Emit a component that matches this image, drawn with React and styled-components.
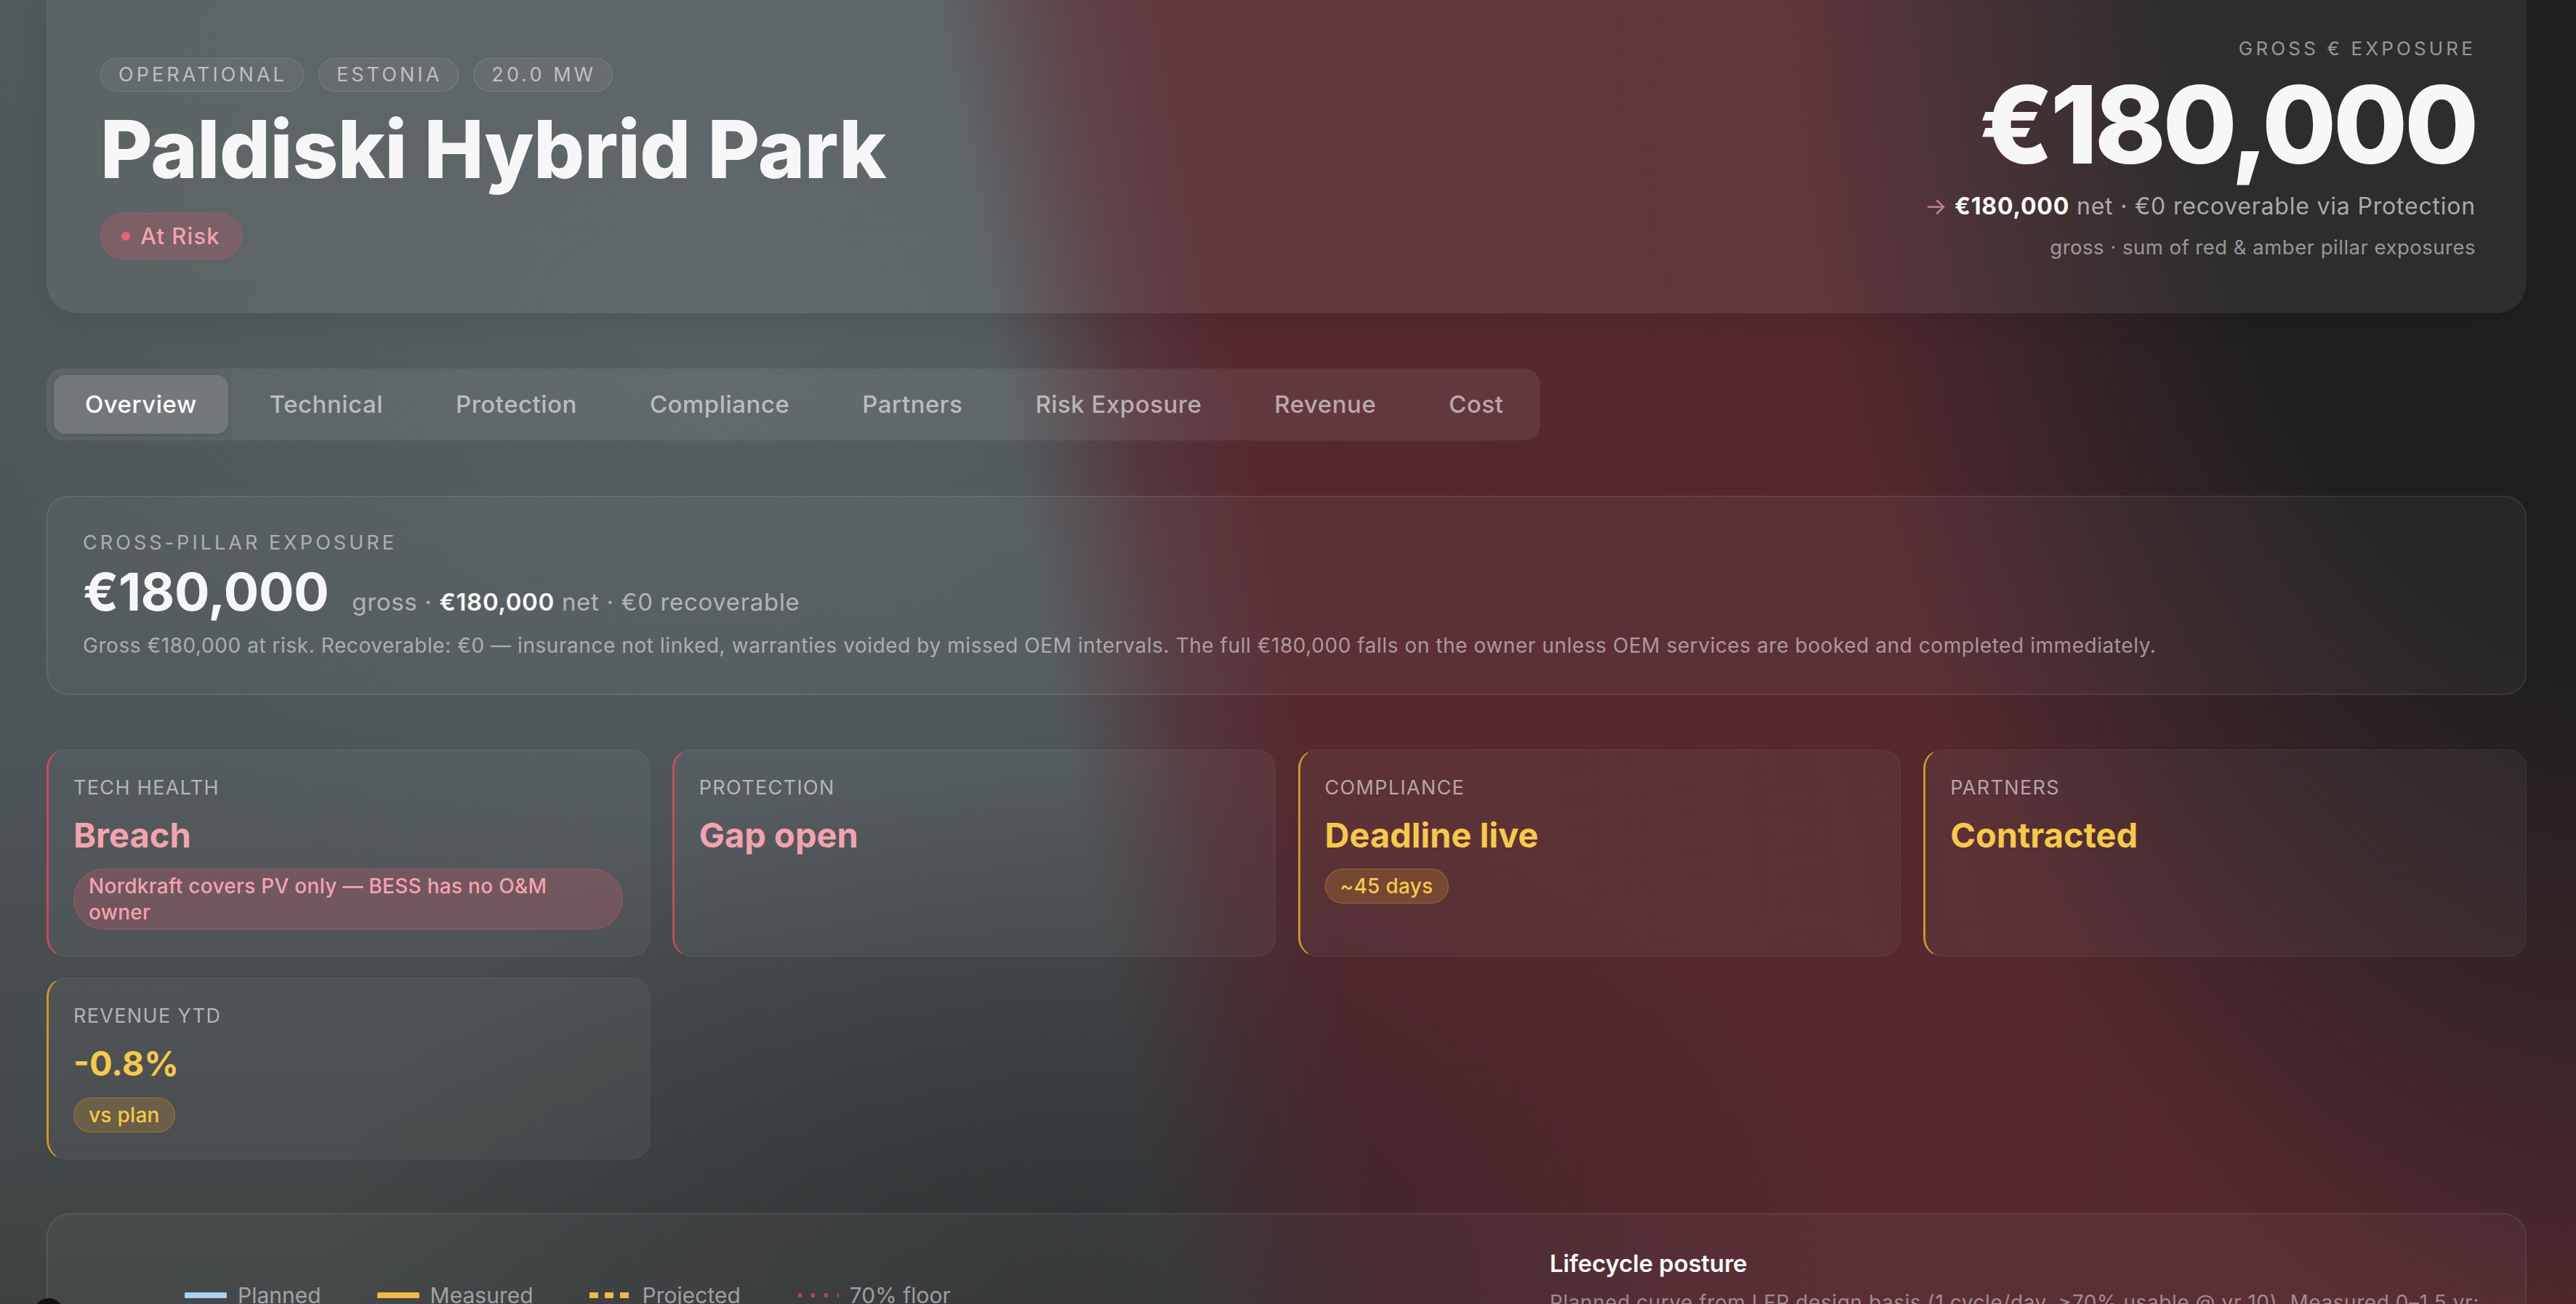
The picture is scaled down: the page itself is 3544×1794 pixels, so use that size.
import React from "react";
import styled, { createGlobalStyle, css } from "styled-components";

const tones = {
  red: { text: "#f4a3ad", edge: "#c94a5c", pillBg: "rgba(232, 92, 112, 0.22)", pillBorder: "rgba(232, 92, 112, 0.32)" },
  amber: { text: "#f7c948", edge: "#cf952a", pillBg: "rgba(222, 156, 42, 0.22)", pillBorder: "rgba(222, 156, 42, 0.4)" },
};

const tags = ["Operational", "Estonia", "20.0 MW"];
const tabs = ["Overview", "Technical", "Protection", "Compliance", "Partners", "Risk Exposure", "Revenue", "Cost"];

const pillars = [
  { label: "Tech health", value: "Breach", tone: "red", note: "Nordkraft covers PV only — BESS has no O&M owner" },
  { label: "Protection", value: "Gap open", tone: "red" },
  { label: "Compliance", value: "Deadline live", tone: "amber", note: "~45 days" },
  { label: "Partners", value: "Contracted", tone: "amber" },
  { label: "Revenue YTD", value: "-0.8%", tone: "amber", note: "vs plan" },
];

const legend = [
  { label: "Planned", kind: "solid", color: "#a9d1f2" },
  { label: "Measured", kind: "solid", color: "#f0b942" },
  { label: "Projected", kind: "dash", color: "#f0b942" },
  { label: "70% floor", kind: "dot", color: "#b8434f" },
];

const Swatch = ({ kind, color }) => (
  <svg width="58" height="10" viewBox="0 0 58 10">
    {kind === "solid" && <rect x="0" y="1" width="58" height="8" rx="1.5" fill={color} />}
    {kind === "dash" && (
      <line x1="0" y1="5" x2="58" y2="5" stroke={color} strokeWidth="8" strokeDasharray="12 9" />
    )}
    {kind === "dot" && (
      <line x1="2" y1="5" x2="58" y2="5" stroke={color} strokeWidth="6" strokeDasharray="5 13" />
    )}
  </svg>
);

export default function App() {
  return (
    <>
      <GlobalStyle />
      <Page>
        <HeaderCard>
          <HeaderLeft>
            <TagRow>
              {tags.map((t) => (
                <Tag key={t}>{t}</Tag>
              ))}
            </TagRow>
            <Title>Paldiski Hybrid Park</Title>
            <StatusPill>
              <StatusDot />
              At Risk
            </StatusPill>
          </HeaderLeft>
          <HeaderRight>
            <Eyebrow>Gross € exposure</Eyebrow>
            <BigAmount>€180,000</BigAmount>
            <NetLine>
              <Arrow>→</Arrow> <strong>€180,000</strong> net · €0 recoverable via Protection
            </NetLine>
            <Footnote>gross · sum of red &amp; amber pillar exposures</Footnote>
          </HeaderRight>
        </HeaderCard>

        <TabBar>
          {tabs.map((t, i) => (
            <Tab key={t} active={i === 0}>
              {t}
            </Tab>
          ))}
        </TabBar>

        <ExposureCard>
          <SectionLabel>Cross-pillar exposure</SectionLabel>
          <AmountRow>
            <Amount>€180,000</Amount>
            <AmountMeta>
              gross · <strong>€180,000</strong> net · €0 recoverable
            </AmountMeta>
          </AmountRow>
          <Description>
            Gross €180,000 at risk. Recoverable: €0 — insurance not linked, warranties voided by missed OEM
            intervals. The full €180,000 falls on the owner unless OEM services are booked and completed
            immediately.
          </Description>
        </ExposureCard>

        <PillarGrid>
          {pillars.map((p) => (
            <PillarCard key={p.label} tone={p.tone}>
              <PillarLabel>{p.label}</PillarLabel>
              <PillarValue tone={p.tone}>{p.value}</PillarValue>
              {p.note && (
                <div>
                  <Note tone={p.tone}>{p.note}</Note>
                </div>
              )}
            </PillarCard>
          ))}
        </PillarGrid>

        <Panel>
          <ChartCol>
            <Legend>
              {legend.map((l) => (
                <LegendItem key={l.label}>
                  <Swatch kind={l.kind} color={l.color} />
                  {l.label}
                </LegendItem>
              ))}
            </Legend>
            <ChartSpace />
          </ChartCol>
          <SideCol>
            <SideTitle>Lifecycle posture</SideTitle>
            <SideText>
              Planned curve from LFP design basis (1 cycle/day, ≥70% usable @ yr 10). Measured 0–1.5 yr:
              degradation tracking slightly ahead of plan; projection extends the measured slope to year 10.
            </SideText>
          </SideCol>
        </Panel>
      </Page>
      <DevBadge />
    </>
  );
}

const GlobalStyle = createGlobalStyle`
  html {
    min-height: 100%;
    background:
      radial-gradient(ellipse 1400px 2700px at 3600px -300px, #1f1f1f 0%, #1f1f1f 45%, rgba(31, 31, 31, 0) 82%),
      radial-gradient(ellipse 30% 42% at 42% 100%, rgba(28, 28, 30, 0.45), rgba(28, 28, 30, 0) 100%),
      linear-gradient(80deg, rgba(85, 41, 47, 0) 41.5%, rgba(85, 41, 47, 0.7) 46%, #55292f 50%, #53282e 100%),
      radial-gradient(ellipse 28% 45% at 28% 28%, rgba(110, 120, 126, 0.22), rgba(110, 120, 126, 0) 100%),
      linear-gradient(180deg, #51595c 0%, #4e5558 55%, #3e4243 100%);
    background-attachment: fixed;
  }
  body {
    margin: 0;
    font-family: Inter, "Noto Sans", sans-serif;
    color: #f4f4f5;
  }
  * { box-sizing: border-box; }
`;

const Page = styled.div`
  padding: 0 68px 200px 64px;
  display: flex;
  flex-direction: column;
`;

const HeaderCard = styled.header`
  display: flex;
  justify-content: space-between;
  align-items: flex-start;
  padding: 50px 70px 72px 74px;
  background: rgba(255, 255, 255, 0.065);
  border-radius: 0 0 42px 42px;
  box-shadow: 0 10px 40px rgba(0, 0, 0, 0.08);
`;

const HeaderLeft = styled.div`
  padding-top: 30px;
  display: flex;
  flex-direction: column;
  align-items: flex-start;
`;

const TagRow = styled.div`
  display: flex;
  gap: 20px;
`;

const Tag = styled.span`
  font-size: 27px;
  line-height: 34px;
  letter-spacing: 0.15em;
  text-transform: uppercase;
  color: rgba(255, 255, 255, 0.58);
  padding: 5px 22px 5px 24px;
  border-radius: 999px;
  background: rgba(255, 255, 255, 0.05);
  border: 1.5px solid rgba(255, 255, 255, 0.13);
`;

const Title = styled.h1`
  margin: 19px 0 0;
  font-size: 110px;
  line-height: 1.1;
  font-weight: 800;
  letter-spacing: -0.005em;
  color: #f7f7f7;
`;

const StatusPill = styled.span`
  margin-top: 27px;
  display: inline-flex;
  align-items: center;
  gap: 14px;
  padding: 13px 29px 13px 28px;
  font-size: 31px;
  line-height: 36px;
  font-weight: 500;
  letter-spacing: 0.035em;
  color: #f4a3ad;
  border-radius: 999px;
  background: rgba(224, 82, 104, 0.24);
  border: 1.5px solid rgba(224, 82, 104, 0.3);
`;

const StatusDot = styled.span`
  width: 12px;
  height: 12px;
  border-radius: 50%;
  background: #e06475;
`;

const HeaderRight = styled.div`
  display: flex;
  flex-direction: column;
  align-items: flex-end;
  text-align: right;
`;

const Eyebrow = styled.div`
  font-size: 26px;
  line-height: 34px;
  letter-spacing: 0.16em;
  text-transform: uppercase;
  color: rgba(255, 255, 255, 0.52);
`;

const BigAmount = styled.div`
  margin-top: 14px;
  font-size: 148px;
  line-height: 1;
  font-weight: 800;
  letter-spacing: -0.03em;
  color: #f7f7f7;
`;

const NetLine = styled.div`
  margin-top: 17px;
  font-size: 32px;
  line-height: 1.3;
  letter-spacing: 0.025em;
  color: rgba(255, 255, 255, 0.6);

  strong {
    color: #fafafa;
    font-weight: 700;
  }
`;

const Arrow = styled.span`
  color: rgba(240, 170, 180, 0.7);
`;

const Footnote = styled.div`
  margin-top: 16px;
  font-size: 27.5px;
  line-height: 1.4;
  letter-spacing: 0.018em;
  color: rgba(255, 255, 255, 0.52);
`;

const TabBar = styled.nav`
  margin-top: 76px;
  align-self: flex-start;
  display: flex;
  gap: 14px;
  padding: 9px 8px 9px 10px;
  border-radius: 22px;
  background: rgba(255, 255, 255, 0.075);
`;

const Tab = styled.div`
  padding: 19px 43px;
  font-size: 33px;
  line-height: 43px;
  font-weight: 500;
  letter-spacing: 0.015em;
  border-radius: 16px;
  color: rgba(255, 255, 255, 0.58);
  ${(props) =>
    props.active &&
    css`
      color: #ffffff;
      background: rgba(255, 255, 255, 0.13);
      box-shadow: 0 2px 6px rgba(0, 0, 0, 0.12);
    `}
`;

const ExposureCard = styled.section`
  margin-top: 76px;
  padding: 46px 48px 46px 48px;
  border-radius: 30px;
  background: rgba(255, 255, 255, 0.04);
  border: 2px solid rgba(255, 255, 255, 0.07);
`;

const SectionLabel = styled.div`
  font-size: 27px;
  line-height: 34px;
  letter-spacing: 0.15em;
  text-transform: uppercase;
  color: rgba(255, 255, 255, 0.52);
`;

const AmountRow = styled.div`
  margin-top: 11px;
  display: flex;
  align-items: baseline;
  gap: 32px;
`;

const Amount = styled.div`
  font-size: 72px;
  line-height: 1.08;
  font-weight: 700;
  letter-spacing: -0.005em;
  color: #f7f7f7;
`;

const AmountMeta = styled.div`
  font-size: 33px;
  letter-spacing: 0.02em;
  color: rgba(255, 255, 255, 0.55);

  strong {
    color: #fafafa;
    font-weight: 600;
  }
`;

const Description = styled.p`
  margin: 16px 0 0;
  font-size: 28px;
  line-height: 1.4;
  letter-spacing: 0.02em;
  color: rgba(255, 255, 255, 0.5);
`;

const PillarGrid = styled.section`
  margin-top: 75px;
  display: grid;
  grid-template-columns: repeat(4, 1fr);
  gap: 29px 31px;
`;

const PillarCard = styled.div`
  padding: 35px 36px 36px 34px;
  border-radius: 26px;
  background: rgba(255, 255, 255, 0.045);
  border: 1.5px solid rgba(255, 255, 255, 0.05);
  border-left: 3px solid ${(props) => tones[props.tone].edge};
`;

const PillarLabel = styled.div`
  font-size: 27px;
  line-height: 34px;
  letter-spacing: 0.05em;
  text-transform: uppercase;
  color: rgba(255, 255, 255, 0.56);
`;

const PillarValue = styled.div`
  margin-top: 20px;
  font-size: 47px;
  line-height: 1.18;
  font-weight: 700;
  letter-spacing: 0;
  color: ${(props) => tones[props.tone].text};
`;

const Note = styled.span`
  margin-top: 19px;
  display: inline-block;
  padding: 5px 20px;
  font-size: 28px;
  line-height: 36px;
  font-weight: 500;
  letter-spacing: 0.01em;
  border-radius: 999px;
  color: ${(props) => tones[props.tone].text};
  background: ${(props) => tones[props.tone].pillBg};
  border: 1.5px solid ${(props) => tones[props.tone].pillBorder};
`;

const Panel = styled.section`
  margin-top: 74px;
  display: grid;
  grid-template-columns: 1fr 1294px;
  gap: 64px;
  padding: 46px 48px 60px 48px;
  border-radius: 32px;
  background: rgba(255, 255, 255, 0.035);
  border: 2px solid rgba(255, 255, 255, 0.07);
`;

const ChartCol = styled.div`
  padding: 46px 0 0 140px;
`;

const Legend = styled.div`
  display: flex;
  align-items: center;
  gap: 77px;
`;

const LegendItem = styled.div`
  display: flex;
  align-items: center;
  gap: 15px;
  font-size: 30px;
  line-height: 39px;
  color: rgba(255, 255, 255, 0.5);
`;

const ChartSpace = styled.div`
  height: 700px;
`;

const SideCol = styled.div`
  display: flex;
  flex-direction: column;
`;

const SideTitle = styled.h3`
  margin: 0;
  font-size: 33px;
  line-height: 43px;
  font-weight: 600;
  letter-spacing: -0.005em;
  color: #fafafa;
`;

const SideText = styled.p`
  margin: 11px 0 0;
  font-size: 28px;
  line-height: 1.5;
  letter-spacing: 0.02em;
  color: rgba(255, 255, 255, 0.45);
`;

const DevBadge = styled.div`
  position: fixed;
  left: 46px;
  bottom: -34px;
  width: 42px;
  height: 42px;
  border-radius: 50%;
  background: #121212;
`;
